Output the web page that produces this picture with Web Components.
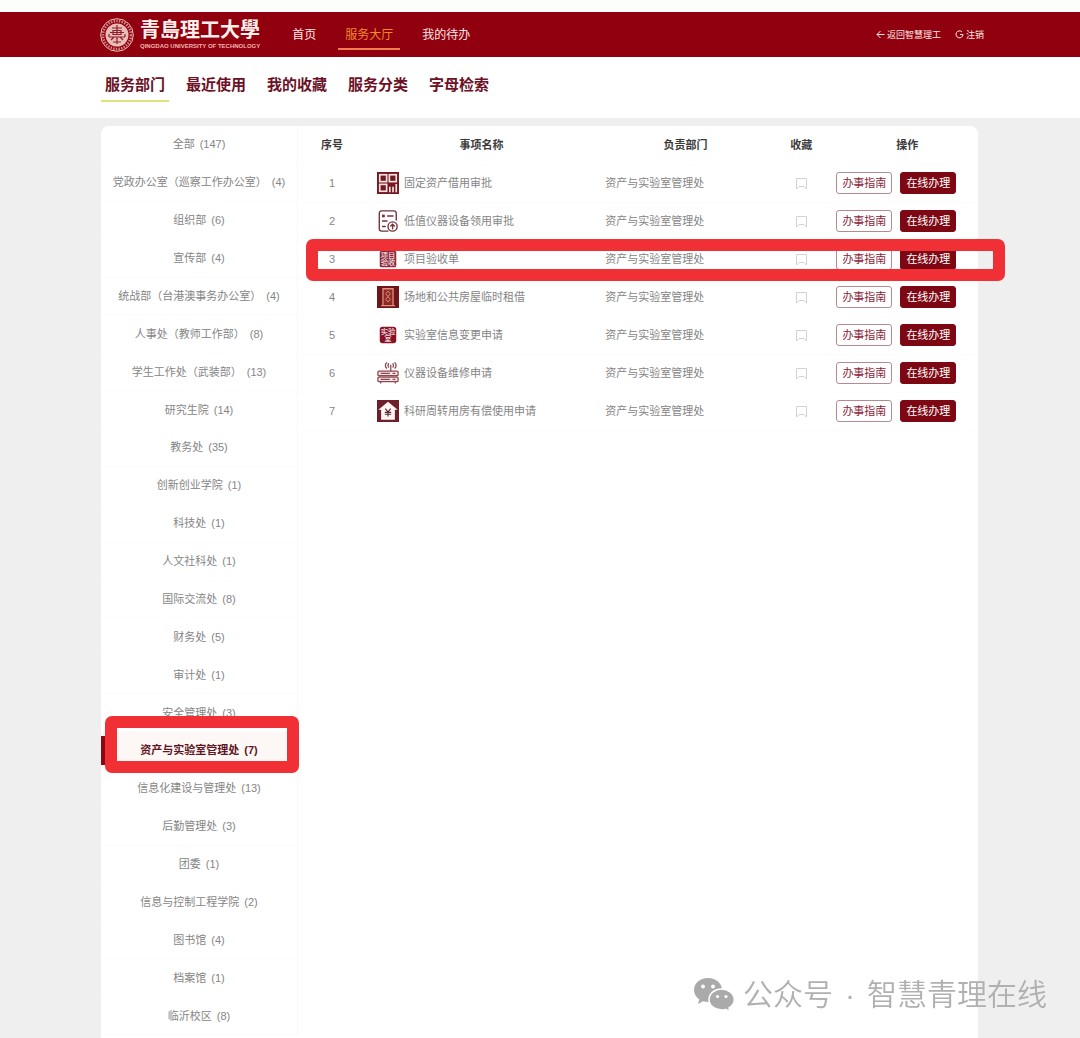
<!DOCTYPE html>
<html lang="zh-CN">
<head>
<meta charset="utf-8">
<title>服务大厅</title>
<style>
    body {
        margin: 0;
        background-color: #efefef;
        font-family: "Liberation Sans", "Noto Sans CJK SC", sans-serif;
        font-size: 11px;
        color: #858585;
    }
</style>
</head>
<body>
<service-hall></service-hall>

<script>
const define = (name, template, setup) => {
    customElements.define(name, class extends HTMLElement {
        constructor() {
            super();
            this.attachShadow({ mode: 'open' });
        }

        connectedCallback() {
            this.shadowRoot.innerHTML = typeof template === 'function' ? template(this) : template;
            if (setup) setup(this);
        }
    });
};

const departments = [
    ['全部', 147], ['党政办公室（巡察工作办公室）', 4], ['组织部', 6], ['宣传部', 4],
    ['统战部（台港澳事务办公室）', 4], ['人事处（教师工作部）', 8], ['学生工作处（武装部）', 13],
    ['研究生院', 14], ['教务处', 35], ['创新创业学院', 1], ['科技处', 1], ['人文社科处', 1],
    ['国际交流处', 8], ['财务处', 5], ['审计处', 1], ['安全管理处', 3], ['资产与实验室管理处', 7],
    ['信息化建设与管理处', 13], ['后勤管理处', 3], ['团委', 1], ['信息与控制工程学院', 2],
    ['图书馆', 4], ['档案馆', 1], ['临沂校区', 8]
];

const services = [
    ['qr', '固定资产借用审批'],
    ['form', '低值仪器设备领用审批'],
    ['check', '项目验收单'],
    ['door', '场地和公共房屋临时租借'],
    ['lab', '实验室信息变更申请'],
    ['device', '仪器设备维修申请'],
    ['house', '科研周转用房有偿使用申请']
];

const icons = {
    qr: `
        <rect width="24" height="24" fill="#741822"/>
        <g fill="none" stroke="#fbe3e3" stroke-width="1.8">
            <rect x="3" y="3" width="7.500" height="7.500"/>
            <rect x="13.500" y="3" width="7.500" height="7.500"/>
            <rect x="3" y="13.500" width="7.500" height="7.500"/>
            <path d="M14 22v-6M17.500 22v-6M21 22v-9"/>
        </g>`,
    form: `
        <g fill="none" stroke="#75323a" stroke-width="1.500" stroke-linecap="round">
            <path d="M12 23H5a2.500 2.500 0 0 1-2.500-2.500V3.500A2.500 2.500 0 0 1 5 1h13.500A2.500 2.500 0 0 1 21 3.500V11"/>
            <path d="M11.500 6.500h6M6 12h5M6 18h3"/>
            <circle cx="17" cy="18" r="5"/>
            <path d="M17 20.500v-4.500M15 17.500l2-2 2 2"/>
        </g>
        <rect x="5.500" y="5" width="3" height="3" fill="#75323a"/>`,
    check: `
        <rect x="3" y="3" width="18" height="18" rx="2" fill="#8d2636"/>
        <g fill="#fff" font-size="8" text-anchor="middle"><text x="12" y="11">项目</text><text x="12" y="19">验收</text></g>`,
    door: `
        <rect width="24" height="24" fill="#6f1519"/>
        <rect x="6.500" y="3" width="11" height="17.500" fill="#8e2a26"/>
        <g fill="none" stroke="#e0907c" stroke-width="1.400">
            <path d="M6.500 21V3h11v18M4.500 21.500h15"/>
            <path d="M12 5.500 14.500 8.500 12 11.500 9.500 8.500zM12 11.500l2.500 3-2.500 3-2.500-3z" stroke-width="1"/>
        </g>`,
    lab: `
        <rect x="3" y="3" width="18" height="18" rx="3" fill="#8a1024"/>
        <g fill="#fff" font-size="8" text-anchor="middle"><text x="12" y="11">实验</text><text x="12" y="19">室</text></g>`,
    device: `
        <g fill="#f7e4e4" stroke="#8d4952" stroke-width="1.400">
            <rect x="1" y="10" width="22" height="5" rx="1"/>
            <rect x="1" y="16.500" width="22" height="5" rx="1"/>
        </g>
        <g fill="none" stroke="#8d4952" stroke-width="1.400">
            <path d="M4 12.500h10M4 19h10M17 12.500h3M17 19h3M4 21.500v2M20 21.500v2M15 10V3"/>
            <path d="M13 6c-1.300-1-1.300-3.500 0-4.500M17 6c1.300-1 1.300-3.500 0-4.500M10.800 7c-2.200-1.800-2.200-4.800 0-6.500M19.200 7c2.200-1.800 2.200-4.800 0-6.500"/>
        </g>`,
    house: `
        <rect width="24" height="24" fill="#6d202a"/>
        <path d="M12 2 1.500 10.500H4.500V21.500h15V10.500h3z" fill="#fff6f4"/>
        <path d="m9 9.500 3 3.500 3-3.500M8.500 13.500h7M8.500 15.500h7M12 13v5" fill="none" stroke="#53272b" stroke-width="1.200"/>`
};

define('service-icon', el => `
    <style>
        :host { display: block; width: 24px; height: 24px; flex: none; }
        svg { display: block; width: 22px; height: 22px; margin: 1px; }
    </style>
    <svg viewBox="0 0 24 24" aria-hidden="true">${icons[el.getAttribute('name')]}</svg>
`);

// Marker frame drawn over its positioned parent
define('mark-frame', `
    <style>
        :host {
            display: block;
            position: absolute;
            z-index: 2;
            box-sizing: border-box;
            border: 12px solid #f03035;
            border-radius: 7px;
            pointer-events: none;
        }
    </style>
`);

define('school-logo', `
    <style>
        :host { display: block; color: #fff0ec; }
        a { display: flex; align-items: center; gap: 6px; color: inherit; text-decoration: none; }
        svg { width: 34px; height: 34px; flex: none; }
        .names { display: flex; flex-direction: column; }
        .cn { font-size: 20px; line-height: 23px; font-weight: 700; white-space: nowrap; }
        .en { font-size: 6px; line-height: 8px; font-weight: 700; white-space: nowrap; color: #f4b6ae; }
    </style>
    <a href="#">
        <svg viewBox="0 0 34 34" aria-hidden="true">
            <g fill="none" stroke="#edc1bb">
                <circle cx="17" cy="17" r="16.300" stroke-width="1"/>
                <circle cx="17" cy="17" r="14" stroke-width="2.600" stroke-dasharray="1.500 1.200" opacity=".7"/>
            </g>
            <circle cx="17" cy="17" r="11.500" fill="#e9bcb8"/>
            <g fill="none" stroke="#8e2029" stroke-width="1.200">
                <path d="M12 10h10M13 12.500h8v4h-8zM10 14.500h14M17 7v10M9 19h16M11 22l3-3M23 22l-3-3M17 19v7M13 24h8M9 16v3M25 16v3"/>
            </g>
        </svg>
        <span class="names">
            <span class="cn">青島理工大學</span>
            <span class="en">QINGDAO UNIVERSITY OF TECHNOLOGY</span>
        </span>
    </a>
`);

define('page-header', `
    <style>
        :host { display: block; background-color: #90000e; color: #ffe9e4; }
        .bar { display: flex; align-items: center; height: 45px; padding: 0 96px 0 100px; }
        nav { display: flex; gap: 15px; margin-left: 25px; flex: 1; align-self: stretch; align-items: center; }
        a { color: inherit; text-decoration: none; white-space: nowrap; }
        nav a { padding: 2px 7px 0; font-size: 12px; line-height: 26px; border-bottom: 2px solid transparent; }
        nav a.active { color: #f28a2c; border-color: #f47c50; }
        .tools { display: flex; gap: 14px; }
        .tools a { display: flex; align-items: center; gap: 2px; font-size: 9px; }
        svg { width: 9px; height: 9px; fill: none; stroke: currentColor; }
    </style>
    <header class="bar">
        <school-logo></school-logo>
        <nav>
            <a href="#">首页</a>
            <a href="#" class="active">服务大厅</a>
            <a href="#">我的待办</a>
        </nav>
        <div class="tools">
            <a href="#"><svg viewBox="0 0 9 9"><path d="M8.500 4.500H1M4.500 1 1 4.500 4.500 8"/></svg>返回智慧理工</a>
            <a href="#"><svg viewBox="0 0 9 9"><path d="M7 1.900A3.500 3.500 0 1 0 8 4.500H5"/></svg>注销</a>
        </div>
    </header>
`);

define('tab-strip', `
    <style>
        :host { display: block; background-color: #fff; }
        nav { display: flex; gap: 13px; height: 61px; padding: 0 101px; align-items: center; }
        a {
            padding: 0 4px;
            margin-bottom: 4px;
            font-size: 15px;
            line-height: 30px;
            font-weight: 700;
            color: #6c1126;
            text-decoration: none;
            white-space: nowrap;
            border-bottom: 2px solid transparent;
        }
        a.active { border-color: #dfe276; }
    </style>
    <nav>
        <a href="#" class="active">服务部门</a>
        <a href="#">最近使用</a>
        <a href="#">我的收藏</a>
        <a href="#">服务分类</a>
        <a href="#">字母检索</a>
    </nav>
`);

define('department-list', `
    <style>
        :host { display: grid; border-right: 1px solid #f8f8f8; }
        ul { display: grid; grid-auto-rows: 1fr; margin: 0; padding: 0; list-style: none; }
        li { position: relative; display: grid; border-bottom: 1px solid #fcfcfc; }
        a {
            display: flex;
            align-items: center;
            justify-content: center;
            gap: 5px;
            line-height: 16px;
            color: inherit;
            text-decoration: none;
            white-space: nowrap;
        }
        li.active { color: #5f1622; background-color: #fdf8f6; font-weight: 700; }
        li.active::before {
            content: "";
            position: absolute;
            left: 0;
            top: 4px;
            bottom: 4px;
            width: 5px;
            background-color: #8a0815;
        }
        mark-frame { inset: -16px -2px -4px 4px; }
    </style>
    <ul></ul>
`, el => {
    el.shadowRoot.querySelector('ul').innerHTML = departments.map(([name, count]) => {
        const active = name === '资产与实验室管理处';
        return `<li class="${active ? 'active' : ''}">
            <a href="#"><span>${name}</span><span>(${count})</span></a>
            ${active ? '<mark-frame></mark-frame>' : ''}
        </li>`;
    }).join('');
});

define('action-button', el => `
    <style>
        :host { display: block; }
        button {
            display: block;
            box-sizing: border-box;
            height: 22px;
            padding: 0 5px;
            font: inherit;
            line-height: 20px;
            white-space: nowrap;
            color: #8b2438;
            background-color: #fff;
            border: 1px solid #b58a91;
            border-radius: 3px;
            cursor: pointer;
        }
        :host([primary]) button { color: #fff; background-color: #7d0713; border-color: #7d0713; }
    </style>
    <button type="button"><slot></slot></button>
`);

define('service-table', `
    <style>
        :host { display: block; }
        table { width: 100%; table-layout: fixed; border-collapse: collapse; }
        tr { position: relative; height: 38px; }
        th, td { padding: 0; line-height: 16px; border-bottom: 1px solid #fcfcfc; white-space: nowrap; }
        th { color: #3b3b3b; font-weight: 700; text-align: center; }
        th:last-child { padding-left: 8px; }
        td:first-child, td:nth-child(4) { text-align: center; }
        td:nth-child(3) { padding-left: 8px; }
        .name { display: flex; align-items: center; gap: 4px; padding-left: 10px; }
        .actions { display: flex; gap: 8px; padding-left: 8px; }
        .star { display: block; margin: 0 auto; padding: 0; border: 0; background: none; cursor: pointer; }
        .star svg { display: block; width: 13px; height: 13px; fill: none; stroke: #d2d2d2; }
        mark-frame { inset: -1px -27px -3px 8px; }
    </style>
    <table>
        <colgroup>
            <col style="width: 10%"><col style="width: 34%"><col style="width: 26%"><col style="width: 8%"><col style="width: 22%">
        </colgroup>
        <thead>
            <tr><th>序号</th><th>事项名称</th><th>负责部门</th><th>收藏</th><th>操作</th></tr>
        </thead>
        <tbody></tbody>
    </table>
`, el => {
    el.shadowRoot.querySelector('tbody').innerHTML = services.map(([icon, name], i) => `
        <tr>
            <td>${i + 1}${i === 2 ? '<mark-frame></mark-frame>' : ''}</td>
            <td><div class="name"><service-icon name="${icon}"></service-icon><span>${name}</span></div></td>
            <td>资产与实验室管理处</td>
            <td>
                <button class="star" type="button" aria-label="收藏">
                    <svg viewBox="0 0 13 13"><path d="M1.500 1.500h10v10.500l-2.500-2.500h-5l-2.500 2.500z"/></svg>
                </button>
            </td>
            <td><div class="actions">
                <action-button>办事指南</action-button>
                <action-button primary>在线办理</action-button>
            </div></td>
        </tr>
    `).join('');
});

define('account-mark', `
    <style>
        :host {
            position: fixed;
            right: 33px;
            bottom: 22px;
            z-index: 3;
            display: flex;
            align-items: center;
            gap: 8px;
            color: #b0b0b0;
            font-size: 30px;
            line-height: 42px;
            white-space: nowrap;
        }
        svg { width: 42px; height: 36px; }
        .text { display: flex; gap: 12px; font-weight: 350; }
    </style>
    <svg viewBox="0 0 42 36" aria-hidden="true">
        <path fill="#aaa" d="M15 1C7 1 1 6.300 1 13c0 4 2 7.200 5.300 9.400L5 27l5-2.700c1.700.5 3.300.7 5 .7 8 0 14-5.300 14-12S23 1 15 1z"/>
        <path fill="#aaa" stroke="#fff" stroke-width="1.500" d="M28.500 12C21.500 12 16 16.700 16 22.500S21.500 33 28.500 33c1.500 0 3-.2 4.300-.6L37 35l-1-4c3.200-2 5.300-5 5.300-8.500C41.300 16.700 35.500 12 28.500 12z"/>
        <g fill="#fff">
            <circle cx="10" cy="9.500" r="1.900"/><circle cx="20" cy="9.500" r="1.900"/>
            <circle cx="24.500" cy="19.500" r="1.600"/><circle cx="33" cy="19.500" r="1.600"/>
        </g>
    </svg>
    <div class="text"><span>公众号</span><span>·</span><span>智慧青理在线</span></div>
`);

define('service-hall', `
    <style>
        :host {
            display: flex;
            flex-direction: column;
            box-sizing: border-box;
            min-height: 100vh;
            border-top: 12px solid #fdfefc;
        }
        main { display: flex; flex: 1; padding: 8px 102px 0 101px; }
        .card {
            display: grid;
            grid-template-columns: 197px 1fr;
            flex: 1;
            padding-bottom: 3px;
            background-color: #fff;
            border-radius: 8px 8px 0 0;
        }
    </style>
    <page-header></page-header>
    <tab-strip></tab-strip>
    <main>
        <div class="card">
            <department-list></department-list>
            <service-table></service-table>
        </div>
    </main>
    <account-mark></account-mark>
`);
</script>
</body>
</html>
